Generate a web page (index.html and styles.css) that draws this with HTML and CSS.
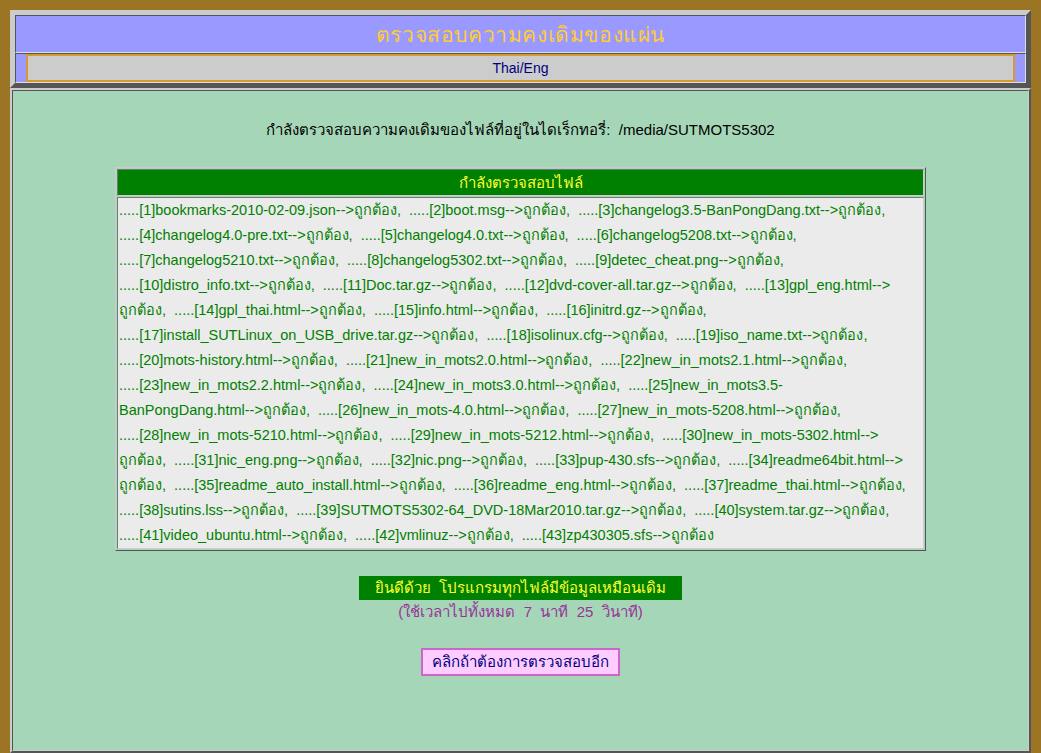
FILE: index.html
```html
<!DOCTYPE html>
<html lang="th">

<head>
    <meta charset="UTF-8">
    <title>ตรวจสอบความคงเดิมของแผ่น</title>
    <link rel="stylesheet" href="styles.css">
</head>

<body>
    <div class="frame top">
        <table class="head">
            <tr>
                <td class="title">ตรวจสอบความคงเดิมของแผ่น</td>
            </tr>
            <tr>
                <td class="lang-cell">
                    <div class="lang">Thai/Eng</div>
                </td>
            </tr>
        </table>
    </div>
    <div class="frame bottom">
        <div class="inner">
            <p class="where">กำลังตรวจสอบความคงเดิมของไฟล์ที่อยู่ในไดเร็กทอรี่:&nbsp; /media/SUTMOTS5302</p>
            <table class="files">
                <tr>
                    <th>กำลังตรวจสอบไฟล์</th>
                </tr>
                <tr>
                    <td class="list">
<span class="n">.....[1]</span>bookmarks-2010-02-09.json<span class="n">--&gt;</span><wbr><span class="n">ถูกต้อง,</span>&nbsp;
<span class="n">.....[2]</span>boot.msg<span class="n">--&gt;</span><wbr><span class="n">ถูกต้อง,</span>&nbsp;
<span class="n">.....[3]</span>changelog3.5-BanPongDang.txt<span class="n">--&gt;</span><wbr><span class="n">ถูกต้อง,</span>&nbsp;
<span class="n">.....[4]</span>changelog4.0-pre.txt<span class="n">--&gt;</span><wbr><span class="n">ถูกต้อง,</span>&nbsp;
<span class="n">.....[5]</span>changelog4.0.txt<span class="n">--&gt;</span><wbr><span class="n">ถูกต้อง,</span>&nbsp;
<span class="n">.....[6]</span>changelog5208.txt<span class="n">--&gt;</span><wbr><span class="n">ถูกต้อง,</span>&nbsp;
<span class="n">.....[7]</span>changelog5210.txt<span class="n">--&gt;</span><wbr><span class="n">ถูกต้อง,</span>&nbsp;
<span class="n">.....[8]</span>changelog5302.txt<span class="n">--&gt;</span><wbr><span class="n">ถูกต้อง,</span>&nbsp;
<span class="n">.....[9]</span>detec_cheat.png<span class="n">--&gt;</span><wbr><span class="n">ถูกต้อง,</span>&nbsp;
<span class="n">.....[10]</span>distro_info.txt<span class="n">--&gt;</span><wbr><span class="n">ถูกต้อง,</span>&nbsp;
<span class="n">.....[11]</span>Doc.tar.gz<span class="n">--&gt;</span><wbr><span class="n">ถูกต้อง,</span>&nbsp;
<span class="n">.....[12]</span>dvd-cover-all.tar.gz<span class="n">--&gt;</span><wbr><span class="n">ถูกต้อง,</span>&nbsp;
<span class="n">.....[13]</span>gpl_eng.html<span class="n">--&gt;</span><wbr><span class="n">ถูกต้อง,</span>&nbsp;
<span class="n">.....[14]</span>gpl_thai.html<span class="n">--&gt;</span><wbr><span class="n">ถูกต้อง,</span>&nbsp;
<span class="n">.....[15]</span>info.html<span class="n">--&gt;</span><wbr><span class="n">ถูกต้อง,</span>&nbsp;
<span class="n">.....[16]</span>initrd.gz<span class="n">--&gt;</span><wbr><span class="n">ถูกต้อง,</span>&nbsp;
<span class="n">.....[17]</span>install_SUTLinux_on_USB_drive.tar.gz<span class="n">--&gt;</span><wbr><span class="n">ถูกต้อง,</span>&nbsp;
<span class="n">.....[18]</span>isolinux.cfg<span class="n">--&gt;</span><wbr><span class="n">ถูกต้อง,</span>&nbsp;
<span class="n">.....[19]</span>iso_name.txt<span class="n">--&gt;</span><wbr><span class="n">ถูกต้อง,</span>&nbsp;
<span class="n">.....[20]</span>mots-history.html<span class="n">--&gt;</span><wbr><span class="n">ถูกต้อง,</span>&nbsp;
<span class="n">.....[21]</span>new_in_mots2.0.html<span class="n">--&gt;</span><wbr><span class="n">ถูกต้อง,</span>&nbsp;
<span class="n">.....[22]</span>new_in_mots2.1.html<span class="n">--&gt;</span><wbr><span class="n">ถูกต้อง,</span>&nbsp;
<span class="n">.....[23]</span>new_in_mots2.2.html<span class="n">--&gt;</span><wbr><span class="n">ถูกต้อง,</span>&nbsp;
<span class="n">.....[24]</span>new_in_mots3.0.html<span class="n">--&gt;</span><wbr><span class="n">ถูกต้อง,</span>&nbsp;
<span class="n">.....[25]</span>new_in_mots3.5-BanPongDang.html<span class="n">--&gt;</span><wbr><span class="n">ถูกต้อง,</span>&nbsp;
<span class="n">.....[26]</span>new_in_mots-4.0.html<span class="n">--&gt;</span><wbr><span class="n">ถูกต้อง,</span>&nbsp;
<span class="n">.....[27]</span>new_in_mots-5208.html<span class="n">--&gt;</span><wbr><span class="n">ถูกต้อง,</span>&nbsp;
<span class="n">.....[28]</span>new_in_mots-5210.html<span class="n">--&gt;</span><wbr><span class="n">ถูกต้อง,</span>&nbsp;
<span class="n">.....[29]</span>new_in_mots-5212.html<span class="n">--&gt;</span><wbr><span class="n">ถูกต้อง,</span>&nbsp;
<span class="n">.....[30]</span>new_in_mots-5302.html<span class="n">--&gt;</span><wbr><span class="n">ถูกต้อง,</span>&nbsp;
<span class="n">.....[31]</span>nic_eng.png<span class="n">--&gt;</span><wbr><span class="n">ถูกต้อง,</span>&nbsp;
<span class="n">.....[32]</span>nic.png<span class="n">--&gt;</span><wbr><span class="n">ถูกต้อง,</span>&nbsp;
<span class="n">.....[33]</span>pup-430.sfs<span class="n">--&gt;</span><wbr><span class="n">ถูกต้อง,</span>&nbsp;
<span class="n">.....[34]</span>readme64bit.html<span class="n">--&gt;</span><wbr><span class="n">ถูกต้อง,</span>&nbsp;
<span class="n">.....[35]</span>readme_auto_install.html<span class="n">--&gt;</span><wbr><span class="n">ถูกต้อง,</span>&nbsp;
<span class="n">.....[36]</span>readme_eng.html<span class="n">--&gt;</span><wbr><span class="n">ถูกต้อง,</span>&nbsp;
<span class="n">.....[37]</span>readme_thai.html<span class="n">--&gt;</span><wbr><span class="n">ถูกต้อง,</span>&nbsp;
<span class="n">.....[38]</span>sutins.lss<span class="n">--&gt;</span><wbr><span class="n">ถูกต้อง,</span>&nbsp;
<span class="n">.....[39]</span>SUTMOTS5302-64_DVD-18Mar2010.tar.gz<span class="n">--&gt;</span><wbr><span class="n">ถูกต้อง,</span>&nbsp;
<span class="n">.....[40]</span>system.tar.gz<span class="n">--&gt;</span><wbr><span class="n">ถูกต้อง,</span>&nbsp;
<span class="n">.....[41]</span>video_ubuntu.html<span class="n">--&gt;</span><wbr><span class="n">ถูกต้อง,</span>&nbsp;
<span class="n">.....[42]</span>vmlinuz<span class="n">--&gt;</span><wbr><span class="n">ถูกต้อง,</span>&nbsp;
<span class="n">.....[43]</span>zp430305.sfs<span class="n">--&gt;</span><wbr><span class="n">ถูกต้อง</span>
                    </td>
                </tr>
            </table>
            <div class="result">
                <span class="ok">ยินดีด้วย&nbsp; โปรแกรมทุกไฟล์มีข้อมูลเหมือนเดิม</span>
                <span class="time">(ใช้เวลาไปทั้งหมด&nbsp; 7&nbsp; นาที&nbsp; 25&nbsp; วินาที)</span>
            </div>
            <div class="again">
                <span class="btn">คลิกถ้าต้องการตรวจสอบอีก</span>
            </div>
        </div>
    </div>
</body>

</html>
```

FILE: styles.css
```css
html {
    background-color: #9b7424;
    font-family: "Liberation Sans", "DejaVu Sans", sans-serif;
    height: 100%;
}

body {
    margin: 0;
    padding: 10px 10px 0 10px;
    height: 753px;
    box-sizing: border-box;
    overflow: hidden;
}

div.frame {
    width: 1021px;
    box-sizing: border-box;
}

div.top {
    height: 78px;
    border: 5px solid;
    border-color: #cccccc #555555 #555555 #cccccc;
    background-color: #cccccc;
}

table.head {
    width: 100%;
    height: 68px;
    border-collapse: separate;
    border-spacing: 0;
    background-color: #9999ff;
}

table.head td {
    padding: 0;
    border: 1px solid;
    border-color: #555555 #dddddd #dddddd #555555;
    text-align: center;
}

td.title {
    height: 36px;
    color: #ffcc33;
    font-size: 21px;
    letter-spacing: 0.6px;
}

td.lang-cell {
    height: 28px;
}

div.lang {
    width: 98%;
    margin: 0 auto;
    height: 28px;
    box-sizing: border-box;
    border: 2px solid #d59b32;
    background-color: #cccccc;
    color: #000080;
    font-size: 14px;
    line-height: 24px;
}

div.bottom {
    height: 665px;
    border: 2px solid;
    border-color: #cccccc #555555 #555555 #cccccc;
}

div.inner {
    height: 100%;
    box-sizing: border-box;
    border: 1px solid;
    border-color: #555555 #cccccc #cccccc #555555;
    background-color: #a6d6b8;
    padding-top: 29px;
}

p.where {
    margin: 0 0 27px 0;
    text-align: center;
    color: black;
    font-size: 15px;
    line-height: 20px;
}

table.files {
    width: 811px;
    margin: 0 auto;
    border: 1px solid;
    border-color: #cccccc #555555 #555555 #cccccc;
    border-spacing: 1px;
}

table.files th,
table.files td {
    border: 1px solid;
    border-color: #777777 #cccccc #cccccc #777777;
}

table.files th {
    background-color: #008000;
    color: #ffff33;
    font-weight: normal;
    font-size: 15px;
    height: 25px;
    padding: 0;
}

td.list {
    background-color: #ebebeb;
    color: #008000;
    font-size: 14.5px;
    line-height: 25px;
    padding: 0 1px;
}

span.n {
    white-space: nowrap;
}

div.result {
    margin-top: 25px;
    display: flex;
    flex-direction: column;
    align-items: center;
}

span.ok {
    background-color: #008000;
    color: #ffff33;
    font-size: 15px;
    line-height: 24px;
    padding: 0 16px;
}

span.time {
    color: #993399;
    font-size: 15px;
    line-height: 24px;
}

div.again {
    margin-top: 24px;
    text-align: center;
}

span.btn {
    display: inline-block;
    background-color: #ffccff;
    border: 2px solid #cc66cc;
    color: #000080;
    font-size: 15px;
    line-height: 24px;
    padding: 0 9px;
}
```
